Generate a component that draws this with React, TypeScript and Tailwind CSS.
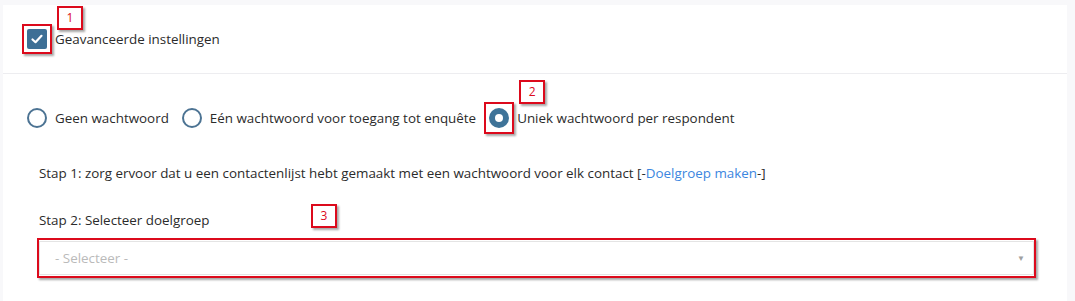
import React from 'react';

function Marker({ className }: { className: string }) {
    return (
        <span
            className={`pointer-events-none absolute border-2 border-[#dc0a1c] shadow-[2px_2px_2px_rgba(0,0,0,0.35)] ${className}`}
        />
    );
}

function Tag({ n, className }: { n: number; className: string }) {
    return (
        <span
            className={`absolute flex h-[24px] w-[26px] items-center justify-center border-2 border-[#dc0a1c] text-[12px] leading-none text-[#dc0a1c] shadow-[2px_2px_2px_rgba(0,0,0,0.35)] ${className}`}
        >
            {n}
        </span>
    );
}

function Radio({ label, checked }: { label: string; checked?: boolean }) {
    return (
        <label className="flex items-center gap-[8px]">
            {checked ? (
                <span className="flex h-[20px] w-[20px] items-center justify-center rounded-full bg-[#3e7398]">
                    <span className="h-[8px] w-[8px] rounded-full bg-white" />
                </span>
            ) : (
                <span className="h-[20px] w-[20px] rounded-full border-2 border-[#4c7393] bg-white" />
            )}
            <span>{label}</span>
        </label>
    );
}

export default function App() {
    return (
        <div
            className="h-[301px] w-[1075px] overflow-hidden bg-[#f8f8fa] pt-[5px] pl-[3px] text-[13.4px] text-[#2b2b2b]"
            style={{ fontFamily: '"Open Sans", "Liberation Sans", sans-serif' }}
        >
            <div className="relative w-[1064px] bg-white">
                {/* header */}
                <div className="relative flex h-[69px] items-center border-b border-[#ededf0] pl-[24px]">
                    <span className="relative mr-[8px] flex h-[20px] w-[20px] items-center justify-center rounded-[2px] bg-[#3d6f95]">
                        <svg width="14" height="14" viewBox="0 0 14 14" fill="none">
                            <path d="M2.5 7.5 L5.5 10.2 L11.5 3.8" stroke="white" strokeWidth="2.2" strokeLinecap="round" strokeLinejoin="round" />
                        </svg>
                        <Marker className="-left-[5px] -top-[5px] h-[30px] w-[30px]" />
                    </span>
                    <span className="font-medium">Geavanceerde instellingen</span>
                    <Tag n={1} className="left-[54px] top-[1px]" />
                </div>

                {/* body */}
                <div className="px-[24px] pt-[34px] pb-[40px]">
                    <div className="flex items-center gap-[13px]">
                        <Radio label="Geen wachtwoord" />
                        <Radio label="Eén wachtwoord voor toegang tot enquête" />
                        <div className="relative">
                            <Radio label="Uniek wachtwoord per respondent" checked />
                            <Marker className="-left-[5px] -top-[6px] h-[32px] w-[30px]" />
                            <Tag n={2} className="left-[30px] -top-[28px]" />
                        </div>
                    </div>

                    <div className="mt-[35px] pl-[12px]">
                        <p>
                            Stap 1: zorg ervoor dat u een contactenlijst hebt gemaakt met een wachtwoord voor elk contact [-
                            <a className="text-[#3b86e0]">Doelgroep maken</a>-]
                        </p>
                        <div className="relative mt-[27px]">
                            <p>Stap 2: Selecteer doelgroep</p>
                            <Tag n={3} className="left-[272px] -top-[6px]" />
                        </div>
                        <div className="relative mt-[11px] mr-[9px]">
                            <div className="flex h-[34px] items-center justify-between border border-[#e4e4e4] bg-white pr-[8px] pl-[15px]">
                                <span className="text-[#bababa]">- Selecteer -</span>
                                <span className="text-[8px] text-[#a0a0a0]">▼</span>
                            </div>
                            <Marker className="-left-[2px] -top-[3px] -right-[2px] -bottom-[3px]" />
                        </div>
                    </div>
                </div>
            </div>
        </div>
    );
}
